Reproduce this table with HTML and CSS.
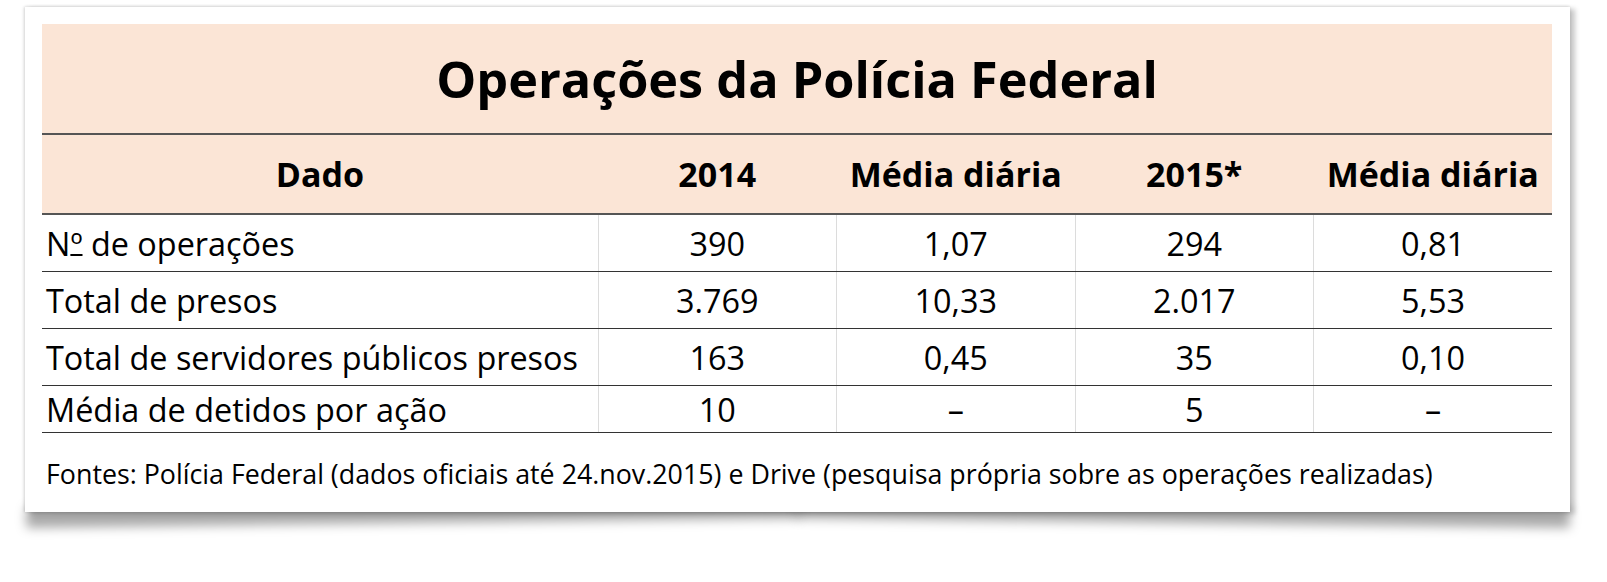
FILE: index.html
```html
<!DOCTYPE html>
<html lang="pt-BR">
<head>
<meta charset="utf-8">
<title>Operações da Polícia Federal</title>
<link rel="stylesheet" href="styles.css">
</head>
<body>
<div class="sheet">
  <div class="card">
    <table class="data">
      <colgroup>
        <col class="c-label">
        <col class="c-num">
        <col class="c-num">
        <col class="c-num">
        <col class="c-num">
      </colgroup>
      <thead>
        <tr class="title-row"><th colspan="5">Operações da Polícia Federal</th></tr>
        <tr class="head-row">
          <th>Dado</th>
          <th>2014</th>
          <th>Média diária</th>
          <th>2015*</th>
          <th>Média diária</th>
        </tr>
      </thead>
      <tbody>
        <tr>
          <td>N<span class="ord">º</span> de operações</td><td>390</td><td>1,07</td><td>294</td><td>0,81</td>
        </tr>
        <tr>
          <td>Total de presos</td><td>3.769</td><td>10,33</td><td>2.017</td><td>5,53</td>
        </tr>
        <tr>
          <td>Total de servidores públicos presos</td><td>163</td><td>0,45</td><td>35</td><td>0,10</td>
        </tr>
        <tr class="last">
          <td>Média de detidos por ação</td><td>10</td><td>–</td><td>5</td><td>–</td>
        </tr>
      </tbody>
    </table>
    <p class="source">Fontes: Polícia Federal (dados oficiais até 24.nov.2015) e Drive (pesquisa própria sobre as operações realizadas)</p>
  </div>
</div>
</body>
</html>
```
FILE: styles.css
```css
html, body {
  margin: 0;
  padding: 0;
  background: #ffffff;
}

body {
  font-family: "Open Sans", "Lato", sans-serif;
  color: #000;
}

.sheet {
  position: relative;
  z-index: 0;
  isolation: isolate;
  background: #ffffff;
  padding: 7px 0 70px 25px;
}

.card {
  position: relative;
  width: 1545px;
  height: 505px;
  box-sizing: border-box;
  padding: 17px 18px 0 17px;
  background: #fff;
  box-shadow: -1px 0 3px rgba(0, 0, 0, 0.16), 5px 2px 5px rgba(0, 0, 0, 0.22), 0 -1px 3px rgba(0, 0, 0, 0.05);
}

.card::before,
.card::after {
  content: "";
  position: absolute;
  z-index: -1;
  bottom: 14px;
  width: 50%;
  height: 20px;
  background: transparent;
  box-shadow: 0 25px 11px rgba(0, 0, 0, 0.34);
}

.card::before {
  left: 1px;
  transform: rotate(-0.7deg);
}

.card::after {
  right: 1px;
  transform: rotate(0.7deg);
}

.data {
  width: 1510px;
  border-collapse: collapse;
  table-layout: fixed;
}

.c-label { width: 556px; }
.c-num { width: 238.5px; }

.data th {
  background: #fbe5d6;
  font-weight: 700;
  padding: 0;
}

.title-row th {
  height: 109px;
  font-size: 50.4px;
  border-bottom: 2px solid #555;
}

.head-row th {
  height: 78px;
  font-size: 34px;
  border-bottom: 2px solid #555;
}

.data td {
  height: 56px;
  padding: 0;
  font-size: 32.4px;
  text-align: center;
  border-bottom: 1px solid #333;
  border-left: 1px solid #dcdcdc;
}

.data td:first-child {
  text-align: left;
  padding-left: 4px;
  border-left: none;
}

.ord {
  text-decoration: underline;
  text-decoration-thickness: 2px;
  text-underline-offset: -2px;
}

.data tr.last td {
  height: 46px;
}

.source {
  margin: 22px 0 0 4px;
  font-size: 26.8px;
}
```
